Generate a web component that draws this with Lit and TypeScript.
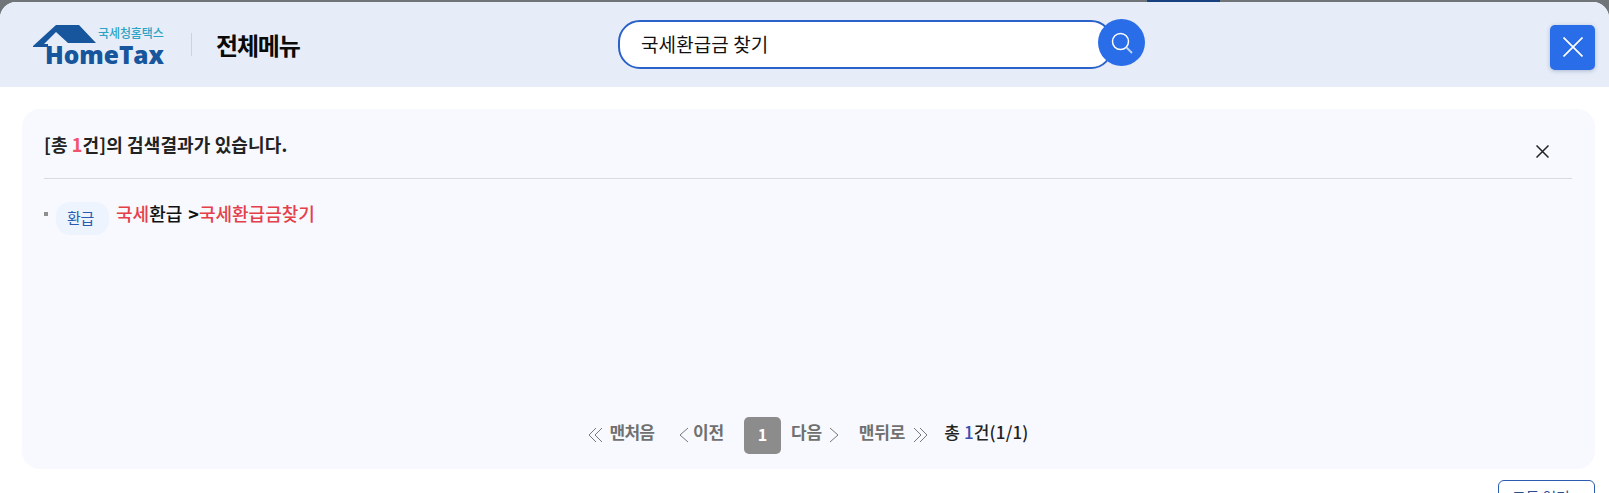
import { LitElement, html, css } from "lit";
import { customElement } from "lit/decorators.js";

@customElement("app-root")
export class AppRoot extends LitElement {
  static styles = css`
    :host {
      display: block;
      width: 100%;
      height: 493px;
      overflow: hidden;
      font-family: "Noto Sans CJK KR", "Noto Sans", sans-serif;
      color: #111;
    }
    .page { height: 493px; background: #70757a; overflow: hidden; }
    .strip { height: 2px; padding-left: 1147px; box-sizing: border-box; }
    .strip i { display: block; width: 73px; height: 2px; background: #17407f; }
    .modal { background: #fff; border-radius: 16px 16px 0 0; height: 491px; overflow: hidden; }
    .head {
      height: 85px;
      background: #e6edf8;
      display: grid;
      grid-template-columns: 618px 495px 1fr auto;
      align-items: center;
      padding-right: 14px;
    }
    .brand { display: flex; align-items: center; padding-left: 32px; }
    .logo { width: 136px; height: 44px; display: block; margin-top: 3px; overflow: visible; }
    .logo .kr { font: 500 12px "Noto Sans CJK KR", sans-serif; fill: #2ba3c4; letter-spacing: -0.1px; }
    .logo .en { font: 800 25px "Open Sans", "Noto Sans", sans-serif; fill: #17559c; }
    .sep { width: 1px; height: 23px; background: #cdd3dc; margin-left: 23px; }
    .title { margin-left: 24px; font-size: 24px; font-weight: 700; letter-spacing: -1.2px; line-height: 32px; color: #0a0a0a; }
    .search {
      height: 49px;
      box-sizing: border-box;
      border: 2px solid #2a62c9;
      border-radius: 22px;
      background: #fff;
      display: flex;
      align-items: center;
      padding: 0 0 2px 21px;
      font-size: 19px;
      font-weight: 400;
      letter-spacing: 0.1px;
    }
    .go {
      grid-column: 3;
      justify-self: start;
      width: 47px;
      height: 47px;
      margin: 0 0 4px -15px;
      border-radius: 50%;
      background: #2a6de8;
      display: flex;
      align-items: center;
      justify-content: center;
      position: relative;
    }
    .close {
      width: 45px;
      height: 45px;
      grid-column: 4;
      border-radius: 5px;
      background: #2a6de8;
      box-shadow: 0 1px 4px rgba(30, 60, 120, 0.3);
      display: flex;
      align-items: center;
      justify-content: center;
      margin-top: 5px;
    }
    .panel {
      margin: 22px 14px 0 22px;
      height: 360px;
      box-sizing: border-box;
      background: #f7f9fe;
      border-radius: 18px;
      padding: 0 23px 0 22px;
      display: flex;
      flex-direction: column;
    }
    .phead {
      height: 69px;
      flex: none;
      border-bottom: 1px solid #d9dbe0;
      display: flex;
      justify-content: space-between;
      align-items: flex-start;
    }
    .count { font-size: 18px; font-weight: 700; letter-spacing: 0.12px; line-height: 24px; margin-top: 23px; color: #222; }
    .count b { font-weight: 700; color: #f2526a; }
    .x { margin: 36px 23px 0 0; display: block; }
    .row { display: flex; align-items: flex-start; margin-top: 22px; }
    .dot { width: 4px; height: 4px; background: #8f8f8f; margin-top: 11px; flex: none; }
    .tag {
      width: 53px;
      height: 33px;
      margin: 1px 0 0 8px;
      padding-right: 4px;
      box-sizing: border-box;
      border-radius: 14px;
      background: #eef4fe;
      color: #2a5bb0;
      font-size: 15px;
      line-height: 31px;
      letter-spacing: -0.2px;
      text-align: center;
      flex: none;
    }
    .path { margin-left: 7px; font-size: 18px; font-weight: 500; line-height: 24px; letter-spacing: 0; color: #111; white-space: pre; }
    .path span { color: #e5404a; }
    .path b { font-weight: 700; margin-left: 2px; }
    .pager {
      margin-top: auto;
      margin-bottom: 15px;
      display: flex;
      align-items: center;
      justify-content: center;
      font-size: 17px;
      font-weight: 700;
      color: #707070;
      letter-spacing: -0.2px;
      height: 37px;
    }
    .pager a { display: flex; align-items: center; }
    .pager a span { padding-bottom: 7px; line-height: 24px; }
    .pager a span.tight { letter-spacing: -0.8px; }
    .g6 { gap: 6px; }
    .g1 { gap: 1px; }
    .g4 { gap: 4px; }
    .g7 { gap: 7px; }
    .ml22 { margin-left: 22px; }
    .ml20 { margin-left: 20px; }
    .ml10 { margin-left: 10px; }
    .ml17 { margin-left: 17px; }
    .cur {
      width: 37px;
      height: 37px;
      border-radius: 5px;
      background: #8c8c8c;
      color: #fff;
      font-size: 16px;
      font-weight: 700;
      line-height: 34px;
      text-align: center;
    }
    .total { color: #222; font-weight: 500; margin-left: 16px; padding-bottom: 7px; line-height: 24px; letter-spacing: 0.15px; }
    .total b { font-weight: 500; color: #3a4fae; }
    .foot { display: flex; justify-content: flex-end; margin: 11px 14px 0 0; }
    .all {
      width: 97px;
      height: 34px;
      box-sizing: border-box;
      border: 1px solid #2a5bb0;
      border-radius: 6px;
      color: #2a4f90;
      font-size: 15px;
      letter-spacing: -0.2px;
      line-height: 31px;
      text-align: center;
    }
  `;

  render() {
    const chev = (d: string) => html`<svg width="16" height="18" viewBox="0 0 16 18" fill="none" stroke="#777" stroke-width="1"><path d=${d}></path></svg>`;
    return html`
      <div class="page">
        <div class="strip"><i></i></div>
        <div class="modal">
          <div class="head">
            <div class="brand">
              <svg class="logo" viewBox="0 0 136 44">
                <path fill="#17559c" d="M1 22 L24 1 H47 L64 19 H36 L24 8 L12 20 H16 V23 H1 Z"></path>
                <text class="kr" x="66" y="14">국세청홈택스</text>
                <text class="en" x="13" y="40" textLength="119" lengthAdjust="spacingAndGlyphs">HomeTax</text>
              </svg>
              <div class="sep"></div>
              <div class="title">전체메뉴</div>
            </div>
            <div class="search">국세환급금 찾기</div>
            <div class="go">
              <svg width="24" height="24" viewBox="0 0 24 24" fill="none" stroke="#fff">
                <circle cx="10.5" cy="10.5" r="8" stroke-width="1.5"></circle>
                <path d="M16.5 16.5 L22 22" stroke="#b9d2f7" stroke-width="2"></path>
              </svg>
            </div>
            <div class="close">
              <svg width="20" height="20" viewBox="0 0 20 20" stroke="#fff" stroke-width="1.7"><path d="M0.5 0.5 L19.5 19.5 M19.5 0.5 L0.5 19.5"></path></svg>
            </div>
          </div>
          <div class="panel">
            <div class="phead">
              <div class="count">[총 <b>1</b>건]의 검색결과가 있습니다.</div>
              <svg class="x" width="13" height="13" viewBox="0 0 13 13" stroke="#222" stroke-width="1.5"><path d="M0.5 0.5 L12.5 12.5 M12.5 0.5 L0.5 12.5"></path></svg>
            </div>
            <div class="row">
              <div class="dot"></div>
              <div class="tag">환급</div>
              <div class="path"><span>국세</span>환급 <b>&gt;</b><span>국세환급금찾기</span></div>
            </div>
            <div class="pager">
              <a class="g6">${chev("M8 1 L1 8 L8 15 M14 1 L7 8 L14 15")}<span class="tight">맨처음</span></a>
              <a class="g1 ml22">${chev("M12 1 L4 8 L12 15")}<span>이전</span></a>
              <div class="cur ml20">1</div>
              <a class="g4 ml10"><span>다음</span>${chev("M4 1 L12 8 L4 15")}</a>
              <a class="g7 ml17"><span>맨뒤로</span>${chev("M2 1 L9 8 L2 15 M8 1 L15 8 L8 15")}</a>
              <div class="total">총 <b>1</b>건(1/1)</div>
            </div>
          </div>
          <div class="foot"><div class="all">모든 열기 +</div></div>
        </div>
      </div>
    `;
  }
}
